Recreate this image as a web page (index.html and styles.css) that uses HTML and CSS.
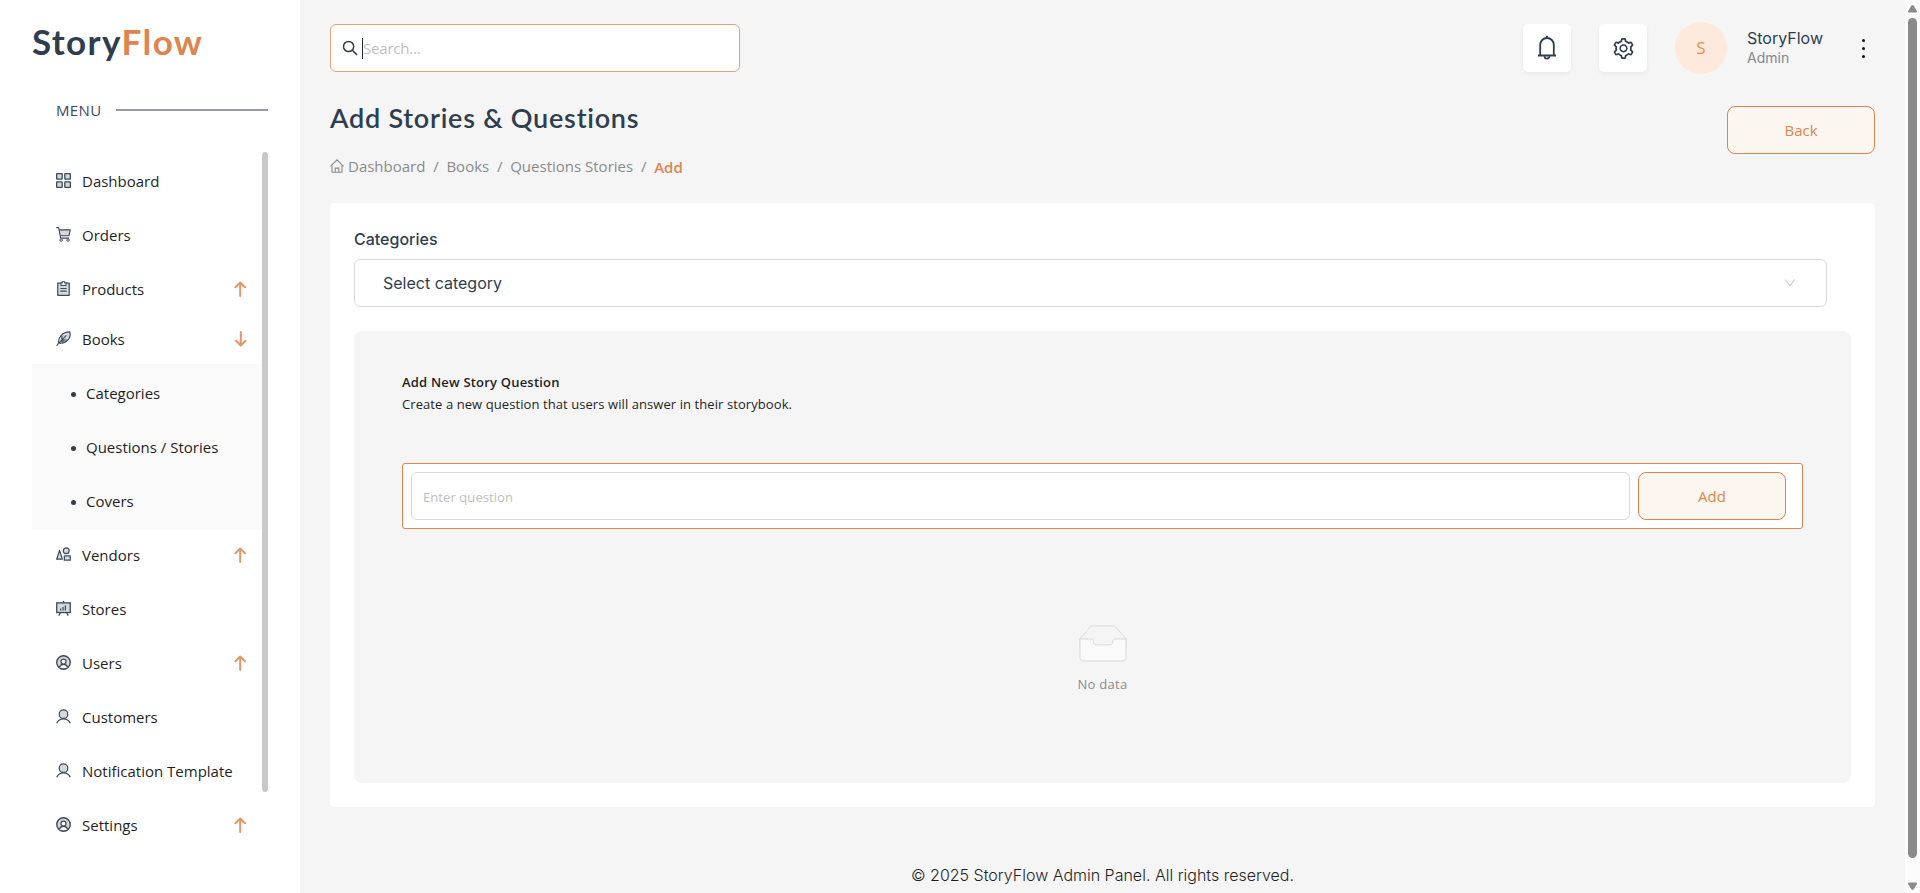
FILE: index.html
```html
<!DOCTYPE html>
<html lang="en">
<head>
<meta charset="utf-8">
<title>StoryFlow Admin</title>
<link rel="stylesheet" href="styles.css">
</head>
<body>
<svg class="defs" width="0" height="0">
  <defs>
    <symbol id="arrow" viewBox="0 0 16 16"><path d="M8.2 15V1.800M3.400 6.300 8.200 1.500l4.800 4.800" fill="none" stroke="currentColor" stroke-width="2" stroke-linecap="round" stroke-linejoin="round"/></symbol>
    <symbol id="person" viewBox="0 0 16 16"><circle cx="8" cy="5.500" r="4.600" fill="#d5d8dc" stroke="currentColor" stroke-width="1.300"/><path d="M.7 15.300C2 12.500 4.500 10.600 8 10.600s6 1.900 7.300 4.700" fill="none" stroke="currentColor" stroke-width="1.300"/></symbol>
    <symbol id="person-ring" viewBox="0 0 16 16"><circle cx="8" cy="8" r="7.200" fill="#d5d8dc" stroke="currentColor" stroke-width="1.500"/><path d="M3.500 13.200c.6-2 2.300-3.200 4.500-3.200s3.900 1.200 4.500 3.200" fill="#fff" stroke="currentColor" stroke-width="1.300"/><circle cx="8" cy="7" r="2.700" fill="#fff" stroke="currentColor" stroke-width="1.300"/></symbol>
  </defs>
</svg>
<div class="app">
  <aside class="sidebar">
    <div class="logo"><span>Story</span><span class="logo-accent">Flow</span></div>
    <div class="menu-title"><span>MENU</span><i></i></div>
    <div class="menu-scroll">
      <nav class="menu">
        <a class="item"><svg class="ico" viewBox="0 0 16 16"><g fill="#d5d8dc" stroke="currentColor" stroke-width="1.400"><rect x=".7" y=".7" width="5.900" height="5.900" rx=".5"/><rect x="9.400" y=".7" width="5.900" height="5.900" rx=".5"/><rect x=".7" y="9.400" width="5.900" height="5.900" rx=".5"/><rect x="9.400" y="9.400" width="5.900" height="5.900" rx=".5"/></g></svg><span>Dashboard</span></a>
        <a class="item"><svg class="ico" viewBox="0 0 16 16"><path d="M3.600 2.900h11.600l-1.500 6.500H4.700z" fill="#d5d8dc"/><path d="M.3.700h2.600l2 11.200h9M3.400 3h11.800l-1.400 6.300H4.500" fill="none" stroke="currentColor" stroke-width="1.200" stroke-linejoin="round"/><circle cx="5.500" cy="13.900" r="1.300" fill="#fff" stroke="currentColor"/><circle cx="12.900" cy="13.900" r="1.300" fill="#fff" stroke="currentColor"/></svg><span>Orders</span></a>
        <a class="item toggle gap-top"><svg class="ico" viewBox="0 0 16 16"><path d="M1.900 2.200h12.200v13.100H1.900z" fill="#d5d8dc" stroke="currentColor" stroke-width="1.300" stroke-linejoin="round"/><path d="M5.300 2.200h1.400V.8h2.600v1.400h1.400v2.500H5.300z" fill="#fff" stroke="currentColor" stroke-width="1.100"/><path d="M4.600 8h6.800M4.600 10.800h6.800" stroke="currentColor" stroke-width="1.200"/></svg><span>Products</span><svg class="arr"><use href="#arrow"/></svg></a>
        <a class="item toggle"><svg class="ico" viewBox="0 0 16 16"><path d="M3 12.700C1.800 7.500 6.500.8 14.700.9c1.300 5.500-.3 7.300-2.300 8.600C10.500 12.500 7 13.400 3 12.700z" fill="#d5d8dc" stroke="currentColor" stroke-width="1.200" stroke-linejoin="round"/><path d="M.6 15.500 11 4.600M6.300 5v4.600h5M5 10.900h4" fill="none" stroke="currentColor" stroke-width="1.200"/></svg><span>Books</span><svg class="arr down"><use href="#arrow"/></svg></a>
        <div class="submenu">
          <a class="sub">Categories</a>
          <a class="sub">Questions / Stories</a>
          <a class="sub">Covers</a>
        </div>
        <a class="item toggle gap-bottom"><svg class="ico" viewBox="0 0 16 16"><g fill="#d5d8dc" stroke="currentColor" stroke-width="1.300"><path d="M3.800 3.600 6.700 13H.7z" stroke-linejoin="round"/><circle cx="10.900" cy="4" r="3.100"/><rect x="8.900" y="9.500" width="6.300" height="4.500"/></g></svg><span>Vendors</span><svg class="arr"><use href="#arrow"/></svg></a>
        <a class="item"><svg class="ico" viewBox="0 0 16 16"><path d="M8 0v2M4.600 12.500 3 15.600M11.400 12.500l1.600 3.100" stroke="currentColor" stroke-width="1.400"/><rect x=".8" y="2" width="14.400" height="10.300" fill="#d5d8dc" stroke="currentColor" stroke-width="1.400"/><path d="M5 10V8M7.500 10V6.500M10 10V4.700" stroke="currentColor" stroke-width="1.300"/></svg><span>Stores</span></a>
        <a class="item toggle gap-top gap-bottom"><svg class="ico"><use href="#person-ring"/></svg><span>Users</span><svg class="arr"><use href="#arrow"/></svg></a>
        <a class="item"><svg class="ico"><use href="#person"/></svg><span>Customers</span></a>
        <a class="item"><svg class="ico"><use href="#person"/></svg><span>Notification Template</span></a>
        <a class="item toggle gap-top"><svg class="ico"><use href="#person-ring"/></svg><span>Settings</span><svg class="arr"><use href="#arrow"/></svg></a>
      </nav>
      <div class="menu-bar"></div>
    </div>
  </aside>

  <main class="main">
    <header class="topbar">
      <div class="search">
        <svg width="16" height="16" viewBox="0 0 16 16" fill="none" stroke="#2e3e4e" stroke-width="1.500"><circle cx="6.600" cy="6.500" r="5.100"/><path d="m10.300 10.200 4.700 4.700"/></svg>
        <i class="caret"></i><span class="ph">Search...</span>
      </div>
      <div class="actions">
        <div class="tile"><svg width="20" height="26" viewBox="0 0 20 26" fill="none" stroke="#2e3e4e" stroke-width="1.800"><path d="M1 20.500h18M3.200 20.500V9.800a6.800 6.800 0 0 1 13.600 0v10.700M10 .8v2.600"/><path d="M7.600 21.200a2.400 2.400 0 0 0 4.800 0"/></svg></div>
        <div class="tile"><svg width="21" height="21" viewBox="64 64 896 896"><path fill="#2e3e4e" d="M924.800 625.700l-65.500-56c3.100-19 4.700-38.400 4.700-57.800s-1.600-38.800-4.700-57.800l65.500-56a32.030 32.030 0 0 0 9.300-35.200l-.9-2.600a443.740 443.740 0 0 0-79.700-137.900l-1.800-2.100a32.120 32.120 0 0 0-35.100-9.500l-81.300 28.900c-30-24.600-63.500-44-99.700-57.600l-15.700-85a32.050 32.050 0 0 0-25.800-25.700l-2.700-.5c-52.100-9.400-106.900-9.400-159 0l-2.700.5a32.050 32.050 0 0 0-25.800 25.700l-15.800 85.400a351.860 351.860 0 0 0-99 57.400l-81.900-29.100a32 32 0 0 0-35.100 9.500l-1.800 2.100a446.020 446.020 0 0 0-79.700 137.900l-.9 2.600c-4.500 12.500-.8 26.500 9.300 35.200l66.300 56.600c-3.100 18.800-4.600 38-4.600 57.100 0 19.200 1.500 38.400 4.600 57.100L99 625.500a32.030 32.030 0 0 0-9.300 35.200l.9 2.600c18.100 50.400 44.900 96.900 79.700 137.900l1.800 2.100a32.120 32.120 0 0 0 35.100 9.500l81.900-29.100c29.800 24.500 63.100 43.900 99 57.400l15.800 85.400a32.050 32.050 0 0 0 25.800 25.700l2.700.5a449.400 449.400 0 0 0 159 0l2.700-.5a32.050 32.050 0 0 0 25.800-25.700l15.700-85a350 350 0 0 0 99.700-57.600l81.300 28.900a32 32 0 0 0 35.100-9.500l1.800-2.100c34.800-41.100 61.600-87.500 79.700-137.900l.9-2.600c4.500-12.300.8-26.300-9.300-35zM788.300 465.900c2.500 15.100 3.800 30.600 3.800 46.100s-1.300 31-3.800 46.100l-6.600 40.100 74.700 63.900a370.030 370.030 0 0 1-42.600 73.600L721 702.800l-31.400 25.800c-23.900 19.600-50.500 35-79.300 45.800l-38.100 14.300-17.900 97a377.500 377.500 0 0 1-85 0l-17.900-97.200-37.800-14.500c-28.500-10.800-55-26.200-78.700-45.700l-31.400-25.900-93.400 33.200c-17-22.900-31.200-47.600-42.600-73.600l75.500-64.500-6.500-40c-2.400-14.900-3.700-30.300-3.700-45.500 0-15.300 1.200-30.600 3.700-45.500l6.500-40-75.500-64.500c11.300-26.100 25.600-50.700 42.600-73.600l93.400 33.200 31.400-25.900c23.700-19.500 50.200-34.900 78.700-45.700l37.900-14.300 17.900-97.200c28.100-3.200 56.800-3.200 85 0l17.900 97 38.100 14.300c28.700 10.800 55.400 26.200 79.300 45.800l31.400 25.800 92.800-32.900c17 22.900 31.200 47.600 42.600 73.600L781.800 426l6.500 39.900zM512 326c-97.200 0-176 78.800-176 176s78.800 176 176 176 176-78.800 176-176-78.800-176-176-176zm79.200 255.200A111.600 111.600 0 0 1 512 614c-29.900 0-58-11.700-79.200-32.800A111.600 111.600 0 0 1 400 502c0-29.900 11.700-58 32.800-79.200C454 401.600 482.100 390 512 390c29.900 0 58 11.600 79.200 32.800A111.600 111.600 0 0 1 624 502c0 29.900-11.700 58-32.800 79.200z"/></svg></div>
        <div class="avatar">S</div>
        <div class="who"><b>StoryFlow</b><span>Admin</span></div>
        <div class="dots"><i></i><i></i><i></i></div>
      </div>
    </header>

    <section class="page-head">
      <div>
        <h1>Add Stories &amp; Questions</h1>
        <div class="crumbs">
          <svg width="14" height="14" viewBox="0 0 14 14" fill="none" stroke="#8b8b8b" stroke-width="1.100"><path d="M.4 7.300 7 .8l6.600 6.500M2 6v7.300h10V6M5.200 13.300V9.100h3.600v4.200"/></svg>
          <span>Dashboard</span><span class="sep">/</span><span>Books</span><span class="sep">/</span><span>Questions Stories</span><span class="sep">/</span><b>Add</b>
        </div>
      </div>
      <div class="btn">Back</div>
    </section>

    <section class="card">
      <label class="label">Categories</label>
      <div class="select"><span>Select category</span><svg width="12" height="10" viewBox="0 0 12 10" fill="none" stroke="#c8c8c8" stroke-width="1.100"><path d="m1.300 1.500 4.700 6.300 4.700-6.300"/></svg></div>
      <div class="panel">
        <h2>Add New Story Question</h2>
        <p class="desc">Create a new question that users will answer in their storybook.</p>
        <div class="form">
          <div class="input">Enter question</div>
          <div class="btn">Add</div>
        </div>
        <div class="empty">
          <svg width="64" height="41" viewBox="0 0 64 41"><g fill="none" stroke="#d9d9d9" transform="translate(0 1)"><path d="M55 12.760 44.854 1.258C44.367.474 43.656 0 42.907 0H21.093c-.749 0-1.460.474-1.947 1.257L9 12.761V22h46v-9.240z"/><path d="M41.613 15.931c0-1.605.994-2.930 2.227-2.931H55v18.137C55 33.260 53.680 35 52.050 35h-40.100C10.320 35 9 33.259 9 31.137V13h11.160c1.233 0 2.227 1.323 2.227 2.928v.022c0 1.605 1.005 2.901 2.237 2.901h14.752c1.232 0 2.237-1.308 2.237-2.913v-.007z" fill="#fafafa"/></g></svg>
          <span>No data</span>
        </div>
      </div>
    </section>
    <footer class="footer">© 2025 StoryFlow Admin Panel. All rights reserved.</footer>
  </main>

  <div class="page-scroll">
    <svg width="9" height="8" viewBox="0 0 9 8"><path d="M4.500 0 Q5.200 0 5.700.8L9 6.200Q9 7.500 8 7.500H1Q0 7.500 0 6.200L3.300.8Q3.800 0 4.500 0z" fill="#8a8a8a"/></svg>
    <div class="thumb"></div>
    <svg class="flip" width="9" height="8" viewBox="0 0 9 8"><path d="M4.500 0 Q5.200 0 5.700.8L9 6.200Q9 7.500 8 7.500H1Q0 7.500 0 6.200L3.300.8Q3.800 0 4.500 0z" fill="#8a8a8a"/></svg>
  </div>
</div>
</body>
</html>
```

FILE: styles.css
```css
* { box-sizing: border-box; }
body {
  margin: 0;
  background: #f5f5f5;
  color: #1f1f1f;
  font-family: "Open Sans", "Noto Sans", sans-serif;
  font-size: 15px;
  overflow: hidden;
}
h1, h2, p { margin: 0; }
svg { display: block; flex: none; }
.defs { display: none; }
.app { display: flex; width: 1920px; height: 893px; }

/* Sidebar */
.sidebar { width: 300px; background: #fff; padding: 19px 32px 0; flex: none; }
.logo {
  height: 44px;
  line-height: 44px;
  font-family: Lato, sans-serif;
  font-weight: 700;
  font-size: 35px;
  letter-spacing: 1.4px;
  color: #2e3e4e;
  white-space: nowrap;
}
.logo-accent { color: #de854f; }
.menu-title {
  display: flex;
  align-items: center;
  gap: 15px;
  height: 20px;
  margin-top: 37px;
  padding-left: 24px;
  color: #3b4a5c;
  letter-spacing: 0.35px;
}
.menu-title i { flex: 1; height: 2px; margin-top: -1px; background: #969bac; }
.menu-scroll { display: flex; margin-top: 32px; }
.menu { flex: 1; padding-top: 2px; }
.menu-bar { width: 6px; height: 640px; border-radius: 3px; background: #c9c9c9; }
.item {
  display: flex;
  align-items: center;
  height: 54px;
  padding: 0 14px 0 24px;
  white-space: nowrap;
}
.item span { padding-left: 11px; flex: 1; }
.toggle { height: 50px; }
.gap-top { margin-top: 2px; }
.gap-bottom { margin-bottom: 2px; }
.ico { width: 15px; height: 15px; color: #3c4a59; margin-top: -1px; }
.arr { width: 16px; height: 16px; color: #e3966a; }
.down { transform: rotate(180deg); margin-right: -1px; }
.submenu { background: #fafafa; padding: 2px 0; }
.sub {
  display: flex;
  align-items: center;
  height: 54px;
  padding-left: 39px;
}
.sub::before {
  content: "";
  width: 5px;
  height: 5px;
  margin-right: 10px;
  margin-top: 2px;
  border-radius: 50%;
  background: #2e3e4e;
}

/* Main column */
.main { flex: 1; padding: 22px 30px 0; display: flex; flex-direction: column; }
.topbar { display: flex; justify-content: space-between; align-items: center; height: 52px; }
.search {
  display: flex;
  align-items: center;
  width: 410px;
  height: 48px;
  padding-left: 11px;
  border: 1px solid #e2a27c;
  border-radius: 6px;
  background: #fff;
}
.caret { width: 1px; height: 21px; background: #1f2937; margin-left: 4px; }
.ph { color: #bfbfbf; letter-spacing: -0.2px; }
.actions { display: flex; align-items: center; }
.tile {
  display: flex;
  align-items: center;
  justify-content: center;
  width: 48px;
  height: 48px;
  margin-right: 28px;
  border-radius: 5px;
  background: #fff;
  box-shadow: 0 2px 4px rgba(0, 0, 0, 0.05);
}
.avatar {
  width: 52px;
  height: 52px;
  border-radius: 50%;
  background: #fdeadc;
  color: #f28b50;
  font-size: 17px;
  line-height: 52px;
  text-align: center;
}
.who { display: flex; flex-direction: column; width: 115px; margin-left: 20px; font-family: Inter, sans-serif; }
.who b { font-weight: 400; font-size: 16px; line-height: 20px; color: #2e3e4e; }
.who span { font-size: 14px; line-height: 20px; color: #828790; }
.dots { display: flex; flex-direction: column; gap: 5px; margin-right: 10px; }
.dots i { width: 3px; height: 3px; border-radius: 50%; background: #111; }

.page-head { display: flex; justify-content: space-between; height: 129px; padding-top: 32px; }
h1 {
  height: 24px;
  line-height: 23px;
  font-family: Lato, sans-serif;
  font-weight: 600;
  font-size: 27px;
  letter-spacing: 0.75px;
  color: #2e3e4e;
}
.crumbs { display: flex; align-items: center; height: 22px; margin-top: 25px; color: #8b8b8b; }
.crumbs svg { margin-right: 4px; }
.crumbs .sep { width: 21px; text-align: center; }
.crumbs b { color: #de854f; font-weight: 600; padding-top: 1px; }
.btn {
  flex: none;
  width: 148px;
  height: 48px;
  border: 1px solid #de854f;
  border-radius: 8px;
  background: #fbf6f0;
  color: #de854f;
  line-height: 46px;
  text-align: center;
}

.card { height: 604px; padding: 24px; border-radius: 5px; background: #fff; }
.label { display: block; height: 32px; font: 500 16px/24px Inter, sans-serif; color: #2e3e4e; }
.select {
  display: flex;
  align-items: center;
  justify-content: space-between;
  width: 1473px;
  height: 48px;
  padding: 0 30px 0 28px;
  border: 1px solid #d9d9d9;
  border-radius: 6px;
  font-family: Inter, sans-serif;
  font-size: 16px;
  color: #2e3e4e;
}
.panel { height: 452px; margin-top: 24px; padding: 40px 48px 0; border-radius: 8px; background: #f5f5f5; font-size: 13px; letter-spacing: 0.08px; }
h2 { height: 22px; line-height: 22px; font-size: 13px; font-weight: 600; letter-spacing: 0.2px; }
.desc { height: 22px; line-height: 22px; }
.form {
  display: flex;
  gap: 8px;
  height: 66px;
  margin-top: 48px;
  padding: 8px 16px 8px 8px;
  border: 1px solid #de854f;
  border-radius: 3px;
  background: #fff;
}
.form .btn { font-size: 15px; }
.input { flex: 1; height: 48px; padding-left: 11px; border: 1px solid #d9d9d9; border-radius: 6px; line-height: 48px; color: #bfbfbf; }
.empty { display: flex; flex-direction: column; align-items: center; margin-top: 96px; color: #8c8c8c; }
.empty span { margin-top: 7px; line-height: 22px; letter-spacing: 0.3px; }
.footer { margin-top: 56px; text-align: center; font: 300 16px/24px Inter, sans-serif; color: #1f1f1f; }

/* Window scrollbar */
.page-scroll { display: flex; flex-direction: column; align-items: center; width: 15px; padding-top: 5px; background: #fcfcfc; }
.thumb { width: 9px; height: 840px; margin: 5px 0 24px; border-radius: 5px; background: #8a8a8a; }
.flip { transform: rotate(180deg); }
```
